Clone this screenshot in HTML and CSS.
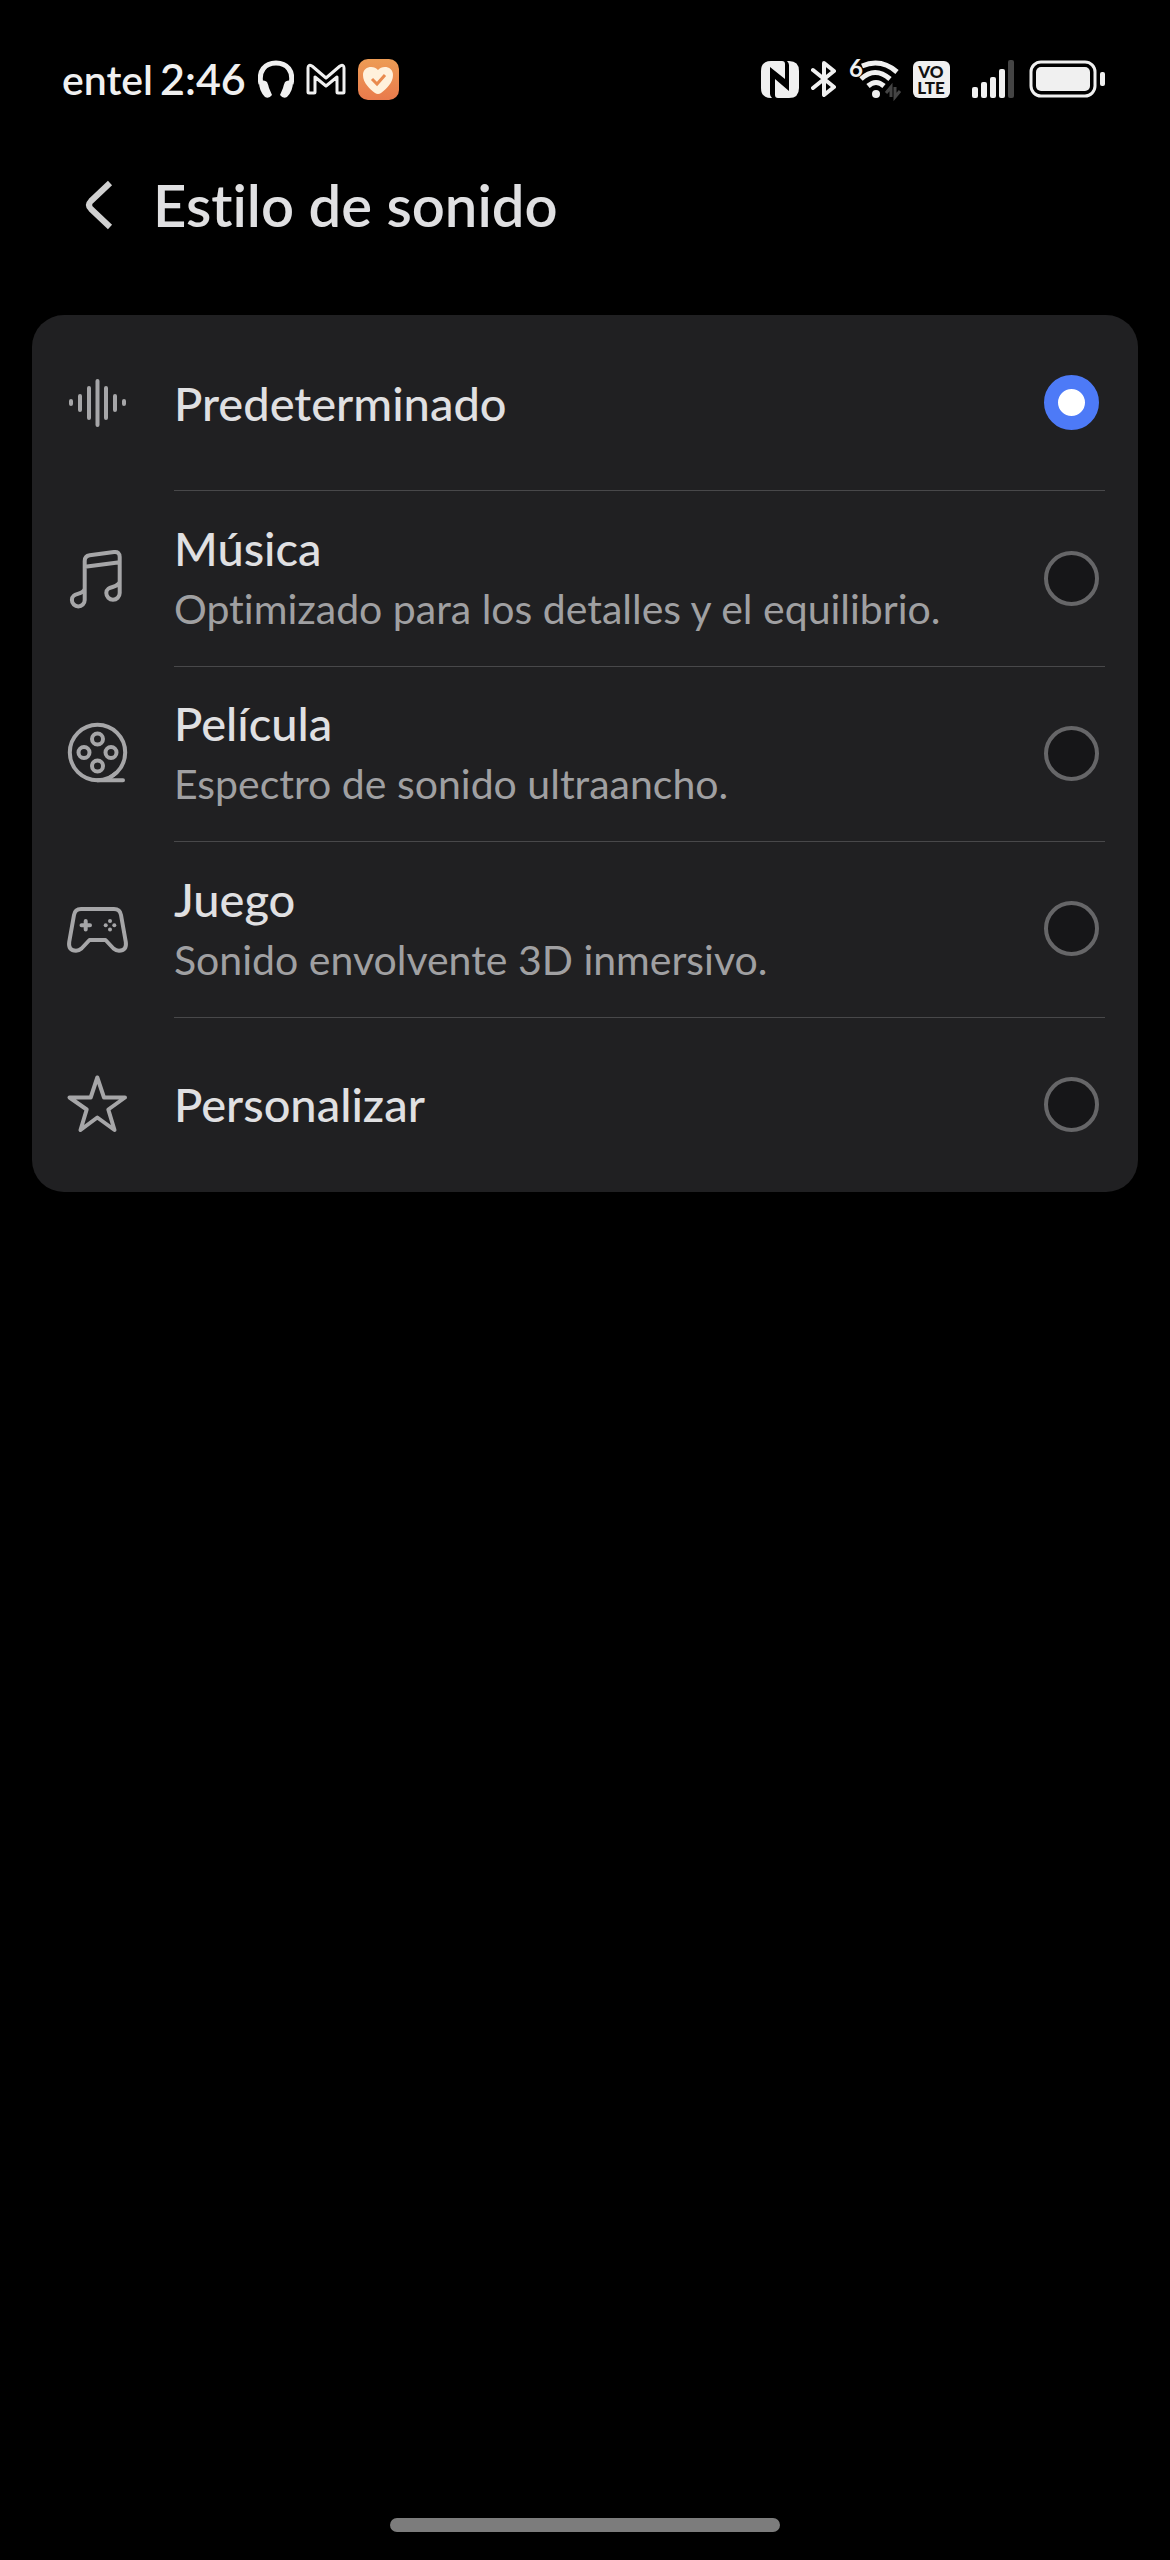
FILE: index.html
```html
<!DOCTYPE html>
<html lang="es">
<head>
    <meta charset="UTF-8">
    <meta name="viewport" content="width=device-width, initial-scale=1.0">
    <title>Estilo de sonido</title>
    <link rel="stylesheet" href="styles.css">
</head>
<body>
    <div class="screen">
        <div class="status-bar">
            <div class="status-left">
                <div class="status-text">
                    <span class="carrier">entel</span>
                    <time class="clock">2:46</time>
                </div>
                <svg class="headphones" width="36" height="38" viewBox="0 0 36 38">
                    <path d="M3 24C0 11 7 3 18 3s18 8 15 21" fill="none" stroke="#f0f0f0" stroke-width="5"/>
                    <path d="M1 22q5-3 8 0 1 2 2 6l3 7q-3 4-7 2-6-6-6-15zM35 22q-5-3-8 0-1 2-2 6l-3 7q3 4 7 2 6-6 6-15z" fill="#f0f0f0"/>
                </svg>
                <svg class="mail" width="40" height="32" viewBox="0 0 40 32">
                    <path d="M2 29V5q0-4 4-2l14 12L34 3q4-2 4 2v24q0 1-1 1h-5q-1 0-1-1V14l-11 9-11-9v15q0 1-1 1H3q-1 0-1-1z" fill="none" stroke="#f0f0f0" stroke-width="3" stroke-linejoin="round"/>
                </svg>
                <svg class="health" width="41" height="41" viewBox="0 0 41 41">
                    <defs>
                        <linearGradient id="orange" x1="0" y1="0" x2="0" y2="1">
                            <stop offset="0" stop-color="#ed9c55"/>
                            <stop offset="1" stop-color="#e97a4c"/>
                        </linearGradient>
                    </defs>
                    <rect width="41" height="41" rx="10" fill="url(#orange)"/>
                    <path d="M20 11c4-5 15-4 15 5 0 8-7 14-12 18q-3 2-6 0C12 30 5 24 5 16c0-9 11-10 15-5z" fill="#fff1dc"/>
                    <path d="M14 20l5 5 8-9" fill="none" stroke="#e98a4e" stroke-width="3"/>
                </svg>
            </div>
            <div class="status-right">
                <svg class="nfc" width="38" height="39" viewBox="0 0 38 39">
                    <path d="M10 1h11q3 0 3 3v15L9 7v27q0 2 2 4h-1Q0 38 0 28V11Q0 1 10 1z" fill="#f0f0f0"/>
                    <path d="M26 1h2q10 0 10 10v17q0 10-10 10H17q-3 0-3-3V19l14 12V5q0-2-2-4z" fill="#f0f0f0"/>
                </svg>
                <svg class="bluetooth" width="26" height="38" viewBox="0 0 26 38">
                    <path d="M2 10l21 17-10 8V3l10 8L2 28" fill="none" stroke="#f0f0f0" stroke-width="4" stroke-linejoin="round" stroke-linecap="round"/>
                </svg>
                <svg class="wifi" width="52" height="42" viewBox="0 0 52 42">
                    <text class="wifi-gen" x="0" y="19">6</text>
                    <g fill="none" stroke="#f0f0f0" stroke-width="5">
                        <path d="M13 8q19-8 35 6"/>
                        <path d="M12 21q14-13 29 0"/>
                        <path d="M19 28q8-7 16 0"/>
                    </g>
                    <circle cx="27" cy="36" r="4" fill="#f0f0f0"/>
                    <path d="M42 39V29l-5 6M46 29v10l5-6" fill="none" stroke="#444" stroke-width="3"/>
                </svg>
                <svg class="volte" width="37" height="37" viewBox="0 0 37 37">
                    <rect width="37" height="37" rx="6" fill="#f0f0f0"/>
                    <text class="volte-text" x="18" y="17">VO</text>
                    <text class="volte-text" x="18" y="33">LTE</text>
                </svg>
                <svg class="signal" width="43" height="38" viewBox="0 0 43 38">
                    <g fill="#f0f0f0">
                        <rect x="0" y="27" width="6" height="11" rx="2"/>
                        <rect x="9" y="22" width="6" height="16" rx="2"/>
                        <rect x="18" y="17" width="6" height="21" rx="2"/>
                        <rect x="27" y="9" width="6" height="29" rx="2"/>
                    </g>
                    <rect x="36" y="0" width="6" height="38" rx="2" fill="#444"/>
                </svg>
                <svg class="battery" width="76" height="38" viewBox="0 0 76 38">
                    <rect x="2" y="2" width="64" height="34" rx="10" fill="none" stroke="#f0f0f0" stroke-width="3"/>
                    <rect x="7" y="7" width="54" height="24" rx="5" fill="#f0f0f0"/>
                    <rect x="71" y="12" width="5" height="14" rx="2" fill="#f0f0f0"/>
                </svg>
            </div>
        </div>

        <header class="title-bar">
            <button class="back" type="button" aria-label="Atrás">
                <svg width="28" height="50" viewBox="0 0 28 50">
                    <path d="M25 3L6 21q-4 4 0 8l19 18" fill="none" stroke="#d0d0d0" stroke-width="6"/>
                </svg>
            </button>
            <h1>Estilo de sonido</h1>
        </header>

        <main class="card">
            <label class="row">
                <svg class="row-icon" viewBox="0 0 64 64">
                    <path d="M5 30v3M14 25v14M23 17v30M31.500 10v44M40 17v30M49 25v14M58 30v3"/>
                </svg>
                <span class="row-body">
                    <span class="row-title">Predeterminado</span>
                </span>
                <input class="radio" type="radio" name="estilo" checked>
            </label>
            <label class="row">
                <svg class="row-icon" viewBox="0 0 64 64">
                    <path d="M18.700 54V15q0-5 5-5.700L48 6q5.700-.7 5.700 5V47a6.700 6.700 0 0 1-13.400 0c0-8 11-4 13.400-11M18.700 54a6.400 6.400 0 0 1-12.800 0c0-8 10-4 12.800-11M19 20.700l34.700-4.500"/>
                </svg>
                <span class="row-body">
                    <span class="row-title">Música</span>
                    <span class="row-text">Optimizado para los detalles y el equilibrio.</span>
                </span>
                <input class="radio" type="radio" name="estilo">
            </label>
            <label class="row">
                <svg class="row-icon" viewBox="0 0 64 64">
                    <circle cx="31.500" cy="31.500" r="27.700"/>
                    <circle cx="31.500" cy="18" r="5.500"/>
                    <circle cx="18" cy="31.500" r="5.500"/>
                    <circle cx="45" cy="31.500" r="5.500"/>
                    <circle cx="31.500" cy="45" r="5.500"/>
                    <path d="M31.500 59.200H57M42 58l8-6"/>
                </svg>
                <span class="row-body">
                    <span class="row-title">Película</span>
                    <span class="row-text">Espectro de sonido ultraancho.</span>
                </span>
                <input class="radio" type="radio" name="estilo">
            </label>
            <label class="row">
                <svg class="row-icon" viewBox="0 0 64 64">
                    <path d="M15 12H48Q54 12 55 18L59.800 45Q61 53.700 53 53.700 50 53.700 47.500 51.500L39.500 43H23.500L15.500 51.500Q13 53.700 10 53.700 2 53.700 3.200 45L8 18Q9 12 15 12z"/>
                    <path d="M15.500 28.300h8.500M19.700 24v8.500"/>
                    <g class="dots">
                        <circle cx="44" cy="24" r="2"/>
                        <circle cx="44" cy="32.500" r="2"/>
                        <circle cx="39.700" cy="28.300" r="2"/>
                        <circle cx="48.300" cy="28.300" r="2"/>
                    </g>
                </svg>
                <span class="row-body">
                    <span class="row-title">Juego</span>
                    <span class="row-text">Sonido envolvente 3D inmersivo.</span>
                </span>
                <input class="radio" type="radio" name="estilo">
            </label>
            <label class="row">
                <svg class="row-icon" viewBox="0 0 64 64">
                    <path d="M31.300 5.500L38 25.500H59L42.300 37.500 48.500 58 31.300 45.500 14.500 58 20.700 37.500 3.500 25.500H24.700z"/>
                </svg>
                <span class="row-body">
                    <span class="row-title">Personalizar</span>
                </span>
                <input class="radio" type="radio" name="estilo">
            </label>
        </main>

        <div class="home-bar"></div>
    </div>
</body>
</html>
```
FILE: styles.css
```css
* {
    box-sizing: border-box;
}
body {
    margin: 0;
    background-color: #000;
    color: #e0e0e2;
    font-family: Lato, "Noto Sans", sans-serif;
    font-variant-ligatures: none;
}
.screen {
    display: flex;
    flex-direction: column;
    min-height: 100vh;
}
svg {
    display: block;
    flex: none;
}

/* status bar */
.status-bar {
    display: flex;
    justify-content: space-between;
    align-items: center;
    height: 158px;
    padding: 0 65px 0 62px;
    color: #f0f0f0;
    font-weight: 600;
}
.status-left,
.status-right {
    display: flex;
    align-items: center;
}
.status-left {
    gap: 12px;
}
.status-right {
    gap: 12px;
}
.status-text {
    display: flex;
    align-items: baseline;
    gap: 7px;
    line-height: 48px;
}
.carrier {
    font-size: 41px;
}
.clock {
    font-size: 43px;
}
.signal {
    margin: 0 2px 0 10px;
}
.wifi {
    overflow: visible;
}
.wifi-gen {
    fill: #f0f0f0;
    font-size: 24px;
    font-weight: 700;
}
.volte-text {
    fill: #111;
    font-size: 17px;
    font-weight: 900;
    text-anchor: middle;
}

/* title */
.title-bar {
    display: flex;
    align-items: center;
    gap: 40px;
    height: 94px;
    padding: 0 85px;
}
.back {
    padding: 0;
    border: 0;
    background: none;
    cursor: pointer;
}
.title-bar h1 {
    margin: 0;
    font-size: 58px;
    font-weight: 600;
    line-height: 72px;
}

/* options */
.card {
    display: grid;
    grid-auto-rows: 1fr;
    min-height: 877px;
    margin: 63px 32px 0;
    border-radius: 32px;
    background-color: #202022;
}
.row {
    display: grid;
    grid-template-columns: 64px 1fr 55px;
    align-items: center;
    column-gap: 44px;
    position: relative;
    padding: 0 39px 0 34px;
    cursor: pointer;
}
.row + .row::before {
    content: "";
    position: absolute;
    top: 0;
    left: 142px;
    right: 33px;
    height: 1px;
    background-color: #48484a;
}
.row-icon {
    width: 64px;
    height: 64px;
    fill: none;
    stroke: #a6a6a8;
    stroke-width: 4;
    stroke-linecap: round;
    stroke-linejoin: round;
}
.row-icon .dots {
    fill: #a6a6a8;
    stroke: none;
}
.row-body {
    display: flex;
    flex-direction: column;
}
.row-title {
    font-size: 47px;
    font-weight: 500;
    line-height: 62px;
}
.row-text {
    color: #a0a0a2;
    font-size: 41px;
    line-height: 60px;
}
.radio {
    appearance: none;
    width: 55px;
    height: 55px;
    margin: 0;
    border: 4px solid #666668;
    border-radius: 50%;
    background-color: #161618;
    cursor: pointer;
}
.radio:checked {
    border: 14px solid #4d7af7;
    background-color: #fff;
}

.home-bar {
    width: 33.333%;
    height: 14px;
    margin: auto auto 28px;
    border-radius: 7px;
    background-color: #7c7c7c;
}
```
